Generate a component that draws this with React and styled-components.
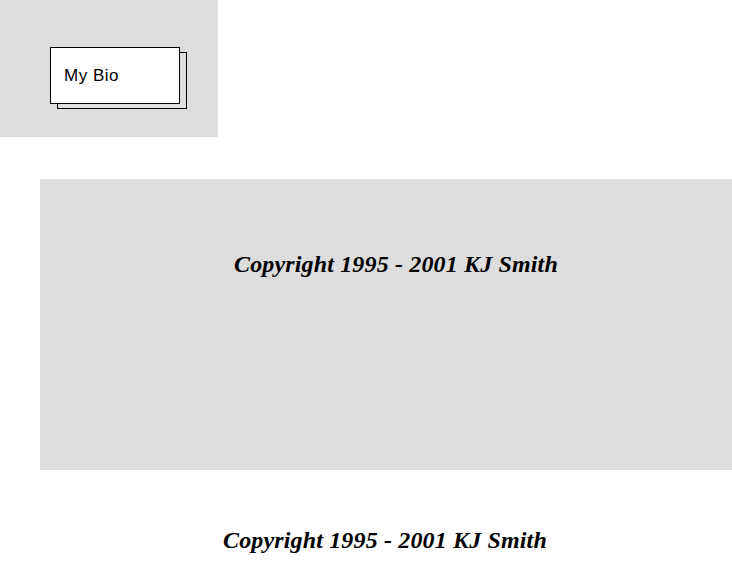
import styled, { createGlobalStyle } from 'styled-components';

const GlobalStyle = createGlobalStyle`
  body {
    margin: 0;
    background: #ffffff;
  }
`;

const Page = styled.div`
  width: 732px;
`;

const Header = styled.div`
  width: 218px;
  height: 137px;
  background: #dddddd;
  padding: 47px 0 0 50px;
  box-sizing: border-box;
`;

const BioCard = styled.div`
  position: relative;
  width: 130px;
  height: 57px;
  box-sizing: border-box;
  display: flex;
  align-items: center;
  padding-left: 14px;
  font-family: 'Liberation Sans', Arial, sans-serif;
  font-size: 17px;
  letter-spacing: 0.5px;
  color: #000000;

  &::before {
    content: '';
    position: absolute;
    left: 7px;
    top: 5px;
    width: 130px;
    height: 57px;
    box-sizing: border-box;
    border: 1px solid #000000;
  }

  &::after {
    content: '';
    position: absolute;
    inset: 0;
    background: #ffffff;
    border: 1px solid #000000;
  }
`;

const BioLabel = styled.span`
  position: relative;
  z-index: 1;
`;

const Panel = styled.div`
  margin: 42px 0 0 40px;
  height: 291px;
  background: #dddddd;
  padding: 71px 0 0 194px;
  box-sizing: border-box;
`;

const Copyright = styled.p`
  margin: 0;
  font-family: 'Liberation Serif', 'Times New Roman', serif;
  font-weight: 700;
  font-style: italic;
  font-size: 24px;
  line-height: 28px;
  letter-spacing: 0.15px;
  color: #000000;
  white-space: nowrap;
`;

const Footer = styled.div`
  padding: 56px 0 0 223px;
`;

export default function App() {
  return (
    <Page>
      <GlobalStyle />
      <Header>
        <BioCard>
          <BioLabel>My Bio</BioLabel>
        </BioCard>
      </Header>
      <Panel>
        <Copyright>Copyright 1995 - 2001 KJ Smith</Copyright>
      </Panel>
      <Footer>
        <Copyright>Copyright 1995 - 2001 KJ Smith</Copyright>
      </Footer>
    </Page>
  );
}
